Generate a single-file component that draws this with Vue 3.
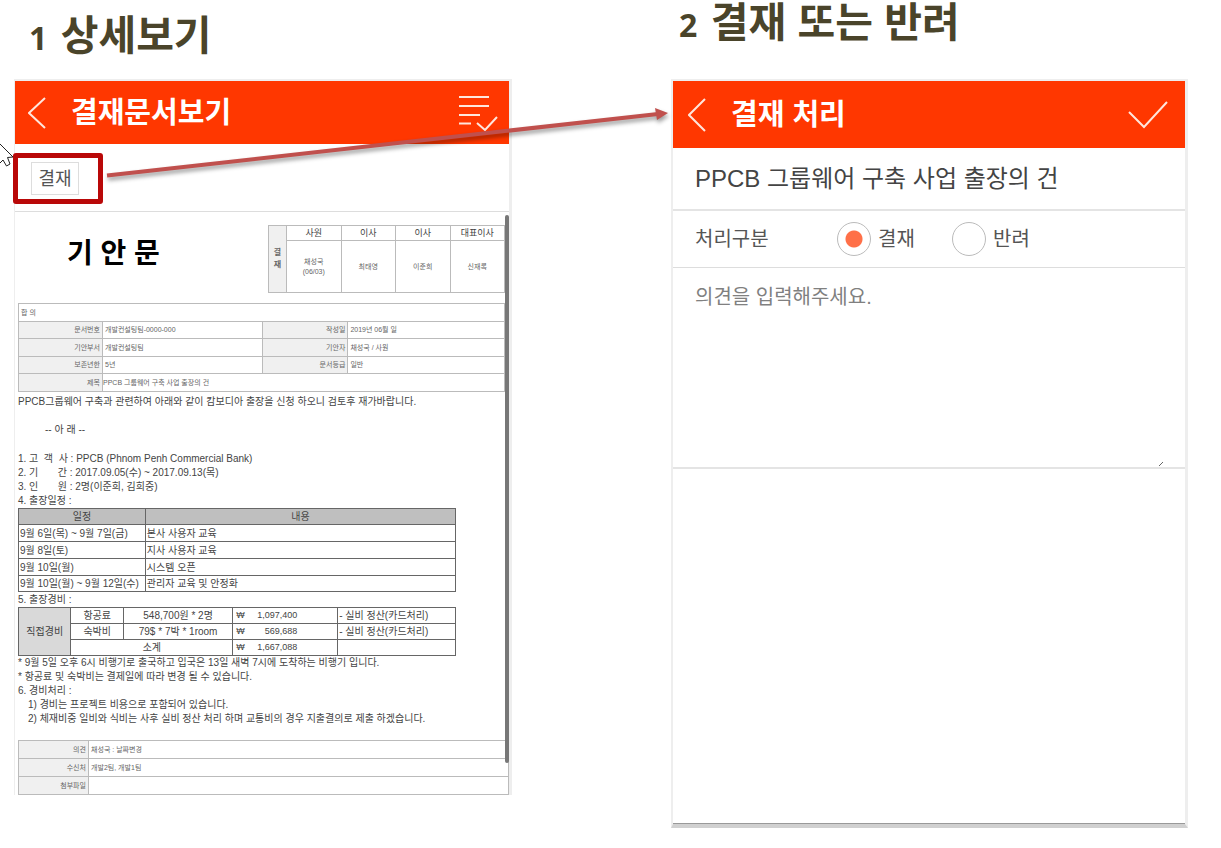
<script setup>
import { ref } from 'vue'

const decision = ref('approve')
const opinion = ref('')

const approvers = [
  { role: '사원', name: '채성국', date: '(06/03)' },
  { role: '이사', name: '최태영' },
  { role: '이사', name: '이준희' },
  { role: '대표이사', name: '신재록' },
]

const meta = [
  ['문서번호', '개발컨설팅팀-0000-000', '작성일', '2019년 06월 일'],
  ['기안부서', '개발컨설팅팀', '기안자', '채성국 / 사원'],
  ['보존년한', '5년', '문서등급', '일반'],
]

const overview = [
  '1. 고  객  사 : PPCB (Phnom Penh Commercial Bank)',
  '2. 기       간 : 2017.09.05(수) ~ 2017.09.13(목)',
  '3. 인       원 : 2명(이준희, 김희중)',
  '4. 출장일정 :',
]

const schedule = [
  ['9월 6일(목) ~ 9월 7일(금)', '본사 사용자 교육'],
  ['9월 8일(토)', '지사 사용자 교육'],
  ['9월 10일(월)', '시스템 오픈'],
  ['9월 10일(월) ~ 9월 12일(수)', '관리자 교육 및 안정화'],
]

const footer = [
  ['의견', '채성국 : 날짜변경'],
  ['수신처', '개발2팀, 개발1팀'],
  ['첨부파일', ''],
]
</script>

<template>
  <main class="page">
    <section class="step">
      <h1 class="heading heading-low"><span class="num">1</span> 상세보기</h1>
      <div class="phone phone-doc">
        <header class="bar bar-doc">
          <button type="button" class="icon-btn" aria-label="뒤로">
            <svg width="18" height="32" viewBox="0 0 18 32"><path d="M17 1 L1 16 L17 31" /></svg>
          </button>
          <h2>결재문서보기</h2>
          <button type="button" class="icon-btn end" aria-label="결재 메뉴">
            <svg width="40" height="36" viewBox="0 0 40 36">
              <path d="M1 2H31M1 11H31M1 20H22M1 28.500H13M19 28L27 35L39 22" />
            </svg>
          </button>
        </header>
        <div class="toolbar">
          <div class="mark"><button type="button" class="approve">결재</button></div>
        </div>
        <div class="doc">
          <div class="doc-head">
            <h3>기 안 문</h3>
            <table class="line approval">
              <tbody>
                <tr class="roles">
                  <th rowspan="2" class="side">결<br />재</th>
                  <td v-for="(a, i) in approvers" :key="i">{{ a.role }}</td>
                </tr>
                <tr class="names">
                  <td v-for="(a, i) in approvers" :key="i">
                    {{ a.name }}<template v-if="a.date"><br />{{ a.date }}</template>
                  </td>
                </tr>
              </tbody>
            </table>
          </div>

          <table class="line meta">
            <colgroup><col class="m1" /><col class="m2" /><col class="m3" /><col /></colgroup>
            <tbody>
              <tr><td colspan="4">합 의</td></tr>
              <tr v-for="row in meta" :key="row[0]">
                <th>{{ row[0] }}</th><td>{{ row[1] }}</td>
                <th>{{ row[2] }}</th><td>{{ row[3] }}</td>
              </tr>
              <tr><th>제목</th><td colspan="3" class="tight">PPCB 그룹웨어 구축 사업 출장의 건</td></tr>
            </tbody>
          </table>

          <div class="body">
            <p class="first">PPCB그룹웨어 구축과 관련하여 아래와 같이 캄보디아 출장을 신청 하오니 검토후 재가바랍니다.</p>
            <p class="below">-- 아 래 --</p>
            <p v-for="text in overview" :key="text" class="pre">{{ text }}</p>
            <table class="grid schedule">
              <colgroup><col class="s1" /><col /></colgroup>
              <thead><tr><th>일정</th><th>내용</th></tr></thead>
              <tbody>
                <tr v-for="row in schedule" :key="row[0]"><td>{{ row[0] }}</td><td>{{ row[1] }}</td></tr>
              </tbody>
            </table>
            <p>5. 출장경비 :</p>
            <table class="grid cost">
              <colgroup><col class="c1" /><col class="c2" /><col class="c3" /><col class="c4" /><col /></colgroup>
              <tbody>
                <tr>
                  <th rowspan="3">직접경비</th>
                  <td class="mid">항공료</td><td class="mid">548,700원 * 2명</td>
                  <td class="num-text"><span class="won"><span>₩</span><span>1,097,400</span></span></td>
                  <td>- 실비 정산(카드처리)</td>
                </tr>
                <tr>
                  <td class="mid">숙박비</td><td class="mid">79$ * 7박 * 1room</td>
                  <td class="num-text"><span class="won"><span>₩</span><span>569,688</span></span></td>
                  <td>- 실비 정산(카드처리)</td>
                </tr>
                <tr>
                  <td colspan="2" class="mid">소계</td>
                  <td class="num-text"><span class="won"><span>₩</span><span>1,667,088</span></span></td>
                  <td></td>
                </tr>
              </tbody>
            </table>
            <p>* 9월 5일 오후 6시 비행기로 출국하고 입국은 13일 새벽 7시에 도착하는 비행기 입니다.</p>
            <p>* 항공료 및 숙박비는 결제일에 따라 변경 될 수 있습니다.</p>
            <p>6. 경비처리 :</p>
            <p class="sub">1) 경비는 프로젝트 비용으로 포함되어 있습니다.</p>
            <p class="sub">2) 체재비중 일비와 식비는 사후 실비 정산 처리 하며 교통비의 경우 지출결의로 제출 하겠습니다.</p>
          </div>

          <table class="line foot">
            <colgroup><col class="f1" /><col /></colgroup>
            <tbody>
              <tr v-for="row in footer" :key="row[0]"><th>{{ row[0] }}</th><td>{{ row[1] }}</td></tr>
            </tbody>
          </table>
          <div class="thumb"></div>
        </div>
      </div>
    </section>

    <section class="step">
      <h1 class="heading"><span class="num">2</span> 결재 또는 반려</h1>
      <form class="phone phone-form" @submit.prevent>
        <header class="bar bar-form">
          <button type="button" class="icon-btn" aria-label="뒤로">
            <svg width="18" height="34" viewBox="0 0 18 34"><path d="M17 1 L1 17 L17 33" /></svg>
          </button>
          <h2>결재 처리</h2>
          <button type="submit" class="icon-btn end" aria-label="확인">
            <svg width="40" height="28" viewBox="0 0 40 28"><path d="M1 11 L16 26 L39 1" /></svg>
          </button>
        </header>
        <p class="subject">PPCB 그룹웨어 구축 사업 출장의 건</p>
        <div class="choices" role="radiogroup" aria-labelledby="kind">
          <span id="kind" class="kind">처리구분</span>
          <label><input v-model="decision" type="radio" name="decision" value="approve" />결재</label>
          <label><input v-model="decision" type="radio" name="decision" value="reject" />반려</label>
        </div>
        <div class="opinion">
          <textarea v-model="opinion" aria-label="의견" placeholder="의견을 입력해주세요."></textarea>
          <svg class="grip" width="6" height="6" viewBox="0 0 6 6"><path d="M1 5L5 1" /></svg>
        </div>
      </form>
    </section>

    <svg class="overlay" viewBox="0 0 1221 848" preserveAspectRatio="none" aria-hidden="true">
      <g class="arrow">
        <path class="shaft" d="M107 175.500 L658 114" />
        <path class="head" d="M655 108 L668 113 L657 120 Z" />
      </g>
      <path class="cursor" d="M0 144 L13 157 L7.500 157.500 L10 164 L6.500 166 L3 160 L0 163" />
    </svg>
  </main>
</template>

<style>
body {
  margin: 0;
  background: #fff;
}
</style>

<style scoped>
.page {
  position: relative;
  display: grid;
  grid-template-columns: 498fr 517fr;
  column-gap: 159px;
  align-items: start;
  min-height: 848px;
  padding: 0 33px 0 14px;
  box-sizing: border-box;
  overflow: hidden;
  font-family: "Liberation Sans", "Noto Sans CJK KR", sans-serif;
  color: #444;
}
h1, h2, h3, p { margin: 0; }
.heading {
  height: 79px;
  box-sizing: border-box;
  padding: 0 0 0 8px;
  font: 700 41px/46px "Liberation Sans", "Noto Sans CJK KR", sans-serif;
  color: #4a442a;
  white-space: nowrap;
}
.heading-low { padding: 13px 0 0 15px; }
.num {
  margin-right: 2px;
  font: 700 32px/46px "Noto Sans", sans-serif;
}
.phone {
  border: solid #eee;
  border-width: 2px 3px 0 1px;
}
.bar {
  display: flex;
  align-items: center;
  background: #ff3700;
  color: #fff;
}
.bar-doc { height: 63px; padding: 0 11px 0 13px; }
.bar-form { height: 67px; padding: 0 17px 0 15px; }
.bar h2 {
  margin-left: 25px;
  font: 700 29px/40px "Liberation Sans", "Noto Sans CJK KR", sans-serif;
}
.icon-btn {
  display: flex;
  padding: 0;
  border: 0;
  background: none;
}
.icon-btn.end { margin-left: auto; }
.icon-btn path {
  fill: none;
  stroke: #ffe6dc;
  stroke-width: 2;
}
.toolbar {
  display: flex;
  height: 58px;
  padding-top: 9px;
  border-bottom: 1px solid #ddd;
}
.mark {
  display: flex;
  align-items: center;
  width: 80px;
  height: 41px;
  margin-left: -2px;
  border: 5px solid #b90808;
  border-radius: 3px;
}
.approve {
  margin-left: 13px;
  width: 48px;
  height: 33px;
  padding: 0;
  border: 1px solid #ddd;
  background: #fff;
  color: #555;
  font: 18px/28px "Liberation Sans", "Noto Sans CJK KR", sans-serif;
}
.doc {
  position: relative;
  padding: 13px 4px 0 3px;
}
.doc-head {
  display: flex;
  justify-content: space-between;
  height: 78px;
}
.doc-head h3 {
  margin: 9px 0 0 49px;
  font: 700 28px/40px "Liberation Sans", "Noto Sans CJK KR", sans-serif;
  color: #000;
  white-space: nowrap;
}
table {
  border-collapse: collapse;
  table-layout: fixed;
}
th, td {
  box-sizing: border-box;
  padding: 0 2px;
  overflow: hidden;
  white-space: nowrap;
}
.line {
  font-size: 7px;
  line-height: 10px;
  color: #666;
}
.line th, .line td { border: 1px solid #bbb; }
.line th {
  background: #f0f0f0;
  font-weight: 400;
  text-align: right;
}
.approval {
  width: 237px;
  height: 68px;
}
.approval td { text-align: center; }
.approval .roles td {
  height: 15px;
  font-size: 9px;
  color: #444;
}
.line .side {
  width: 18px;
  padding: 0;
  text-align: center;
  font-size: 8px;
  line-height: 12px;
  font-weight: 700;
}
.meta { width: 100%; }
.meta tr { height: 18px; }
.meta tr:nth-child(even) { height: 17px; }
.meta .m1 { width: 84px; }
.meta .m2 { width: 33%; }
.meta .m3 { width: 85px; }
.meta .tight { padding-left: 0; }
.body {
  padding: 3px 0 14px;
  font: 10px/14px "Liberation Sans", "Noto Sans CJK KR", sans-serif;
  color: #444;
}
.body p {
  height: 14px;
  white-space: nowrap;
}
.body .first { margin-bottom: 14px; }
.body .below { margin: 0 0 15px 27px; }
.body .pre { white-space: pre; }
.body .sub { padding-left: 10px; }
.grid {
  width: 90%;
  line-height: 13px;
}
.grid th, .grid td {
  border: 1px solid #666;
  padding: 0 1px;
}
.grid th {
  font-weight: 400;
  background: #bfbfbf;
}
.schedule { margin-bottom: 1px; }
.schedule tr { height: 17px; }
.schedule tr:last-child { height: 16px; }
.schedule .s1 { width: 29%; }
.cost tr { height: 16px; }
.grid.cost th { background: #d9d9d9; }
.cost .c1, .cost .c2 { width: 12%; }
.cost .c3 { width: 25%; }
.cost .c4 { width: 24%; }
.mid { text-align: center; }
.num-text { font-size: 9px; }
.won {
  display: flex;
  justify-content: space-between;
  padding: 0 39px 0 2px;
}
.foot { width: calc(100% + 4px); }
.foot tr { height: 18px; }
.foot .f1 { width: 70px; }
.thumb {
  position: absolute;
  top: 3px;
  right: 0;
  bottom: 32px;
  width: 4px;
  border-radius: 2px;
  background: #777;
}
.phone-form {
  min-height: 743px;
  border-width: 2px 3px 4px 2px;
  border-bottom-color: #d0d0d0;
  box-shadow: inset 0 -1px #999;
}
.subject {
  height: 61px;
  padding-left: 22px;
  border-bottom: 2px solid #e4e4e4;
  font-size: 24px;
  line-height: 62px;
  white-space: nowrap;
}
.choices {
  display: flex;
  align-items: center;
  height: 56px;
  padding-left: 22px;
  border-bottom: 1px solid #ddd;
  font-size: 20px;
  line-height: 28px;
  color: #555;
}
.kind { width: 142px; }
.choices label {
  display: flex;
  align-items: center;
  gap: 7px;
  width: 115px;
}
.choices input {
  appearance: none;
  width: 34px;
  height: 34px;
  margin: 0;
  border: 1px solid #bbb;
  border-radius: 50%;
  background: #fff;
}
.choices input:checked {
  background: radial-gradient(circle, #ff7048 8px, #fff 9px);
}
.opinion {
  position: relative;
  display: flex;
  height: 199px;
  border-bottom: 2px solid #e4e4e4;
}
.opinion textarea {
  flex: 1;
  padding: 15px 22px;
  border: 0;
  outline: 0;
  resize: none;
  background: none;
  color: #555;
  font: 20px/28px "Liberation Sans", "Noto Sans CJK KR", sans-serif;
}
.opinion textarea::placeholder { color: #808080; }
.grip {
  position: absolute;
  right: 21px;
  bottom: 0;
}
.grip path { stroke: #666; stroke-width: 1; }
.overlay {
  position: absolute;
  left: 0;
  top: 0;
  width: 100%;
  height: 848px;
  pointer-events: none;
}
.arrow { filter: drop-shadow(1px 3px 2px rgba(0, 0, 0, 0.4)); }
.shaft { stroke: #c0504d; stroke-width: 4; }
.head { fill: #c0504d; }
.cursor { fill: #fff; stroke: #222; stroke-width: 1; }
</style>
